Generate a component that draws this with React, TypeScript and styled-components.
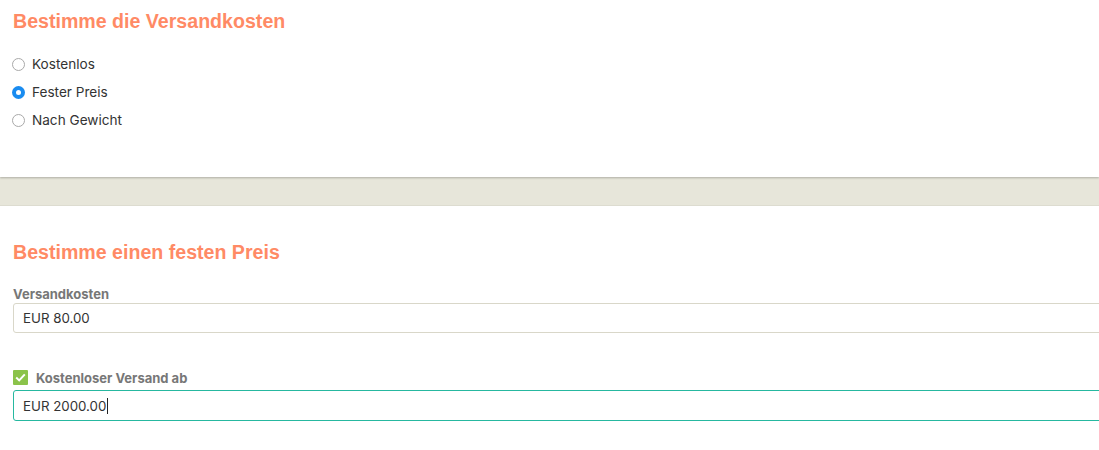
import React from "react";
import styled, { createGlobalStyle } from "styled-components";

const Global = createGlobalStyle`
  html, body { margin: 0; padding: 0; background: #fff; overflow: hidden; }
  body { font-family: Inter, "Liberation Sans", Arial, sans-serif; color: #333; }
  * { box-sizing: border-box; }
`;

const Page = styled.div`
  width: 1099px;
  overflow: hidden;
  display: flex;
  flex-direction: column;
`;

const Panel = styled.section<{ $h: number; $shadow?: boolean }>`
  height: ${(p) => p.$h}px;
  background: #fff;
  padding: 10px 13px 0 13px;
  position: relative;
  box-shadow: ${(p) => (p.$shadow ? "0 1px 2px rgba(0,0,0,0.25)" : "none")};
  z-index: 1;
`;

const Band = styled.div`
  height: 29px;
  background: #e7e6da;
  border-bottom: 1px solid #dddcd0;
`;

const Heading = styled.h2`
  margin: 0;
  font-family: "Liberation Sans", Arial, sans-serif;
  font-size: 19.6px;
  line-height: 22px;
  font-weight: 700;
  color: #ff8a65;
`;

const RadioList = styled.div`
  margin-top: 22px;
  display: flex;
  flex-direction: column;
  gap: 8px;
`;

const RadioRow = styled.label`
  display: flex;
  align-items: center;
  height: 20px;
  gap: 7px;
  font-size: 13.6px;
  color: #333;
`;

const RadioDot = styled.span<{ $on?: boolean }>`
  width: 13px;
  height: 13px;
  margin-left: -1px;
  border-radius: 50%;
  border: ${(p) => (p.$on ? "none" : "1px solid #a9a9a9")};
  background: ${(p) => (p.$on ? "#1a8cf0" : "#fff")};
  display: flex;
  align-items: center;
  justify-content: center;
  &::after {
    content: "";
    display: ${(p) => (p.$on ? "block" : "none")};
    width: 5px;
    height: 5px;
    border-radius: 50%;
    background: #fff;
  }
`;

const FieldLabel = styled.div`
  font-size: 13px;
  font-weight: 700;
  color: #777;
  line-height: 14px;
`;

const Input = styled.div<{ $focus?: boolean }>`
  width: 1120px;
  height: ${(p) => (p.$focus ? 31 : 30)}px;
  border: 1px solid ${(p) => (p.$focus ? "#26b8a0" : "#d9d7c9")};
  border-radius: 3px;
  display: flex;
  align-items: center;
  padding-left: 9px;
  font-size: 13.3px;
  color: #333;
`;

const Caret = styled.span`
  display: inline-block;
  width: 1px;
  height: 16px;
  background: #222;
  margin-left: 1px;
`;

const CheckRow = styled.div`
  display: flex;
  align-items: center;
  gap: 8px;
  margin-top: 37px;
  margin-bottom: 5px;
`;

const CheckBox = styled.span`
  width: 15px;
  height: 15px;
  background: #8bc34a;
  border-radius: 1px;
  display: flex;
  align-items: center;
  justify-content: center;
`;

const Section2Heading = styled(Heading)`
  margin-top: 25px;
  margin-bottom: 24px;
`;

const FirstLabel = styled(FieldLabel)`
  margin-bottom: 2px;
`;

export default function App() {
  return (
    <Page>
      <Global />
      <Panel $h={177} $shadow>
        <Heading>Bestimme die Versandkosten</Heading>
        <RadioList>
          <RadioRow>
            <RadioDot />
            Kostenlos
          </RadioRow>
          <RadioRow>
            <RadioDot $on />
            Fester Preis
          </RadioRow>
          <RadioRow>
            <RadioDot />
            Nach Gewicht
          </RadioRow>
        </RadioList>
      </Panel>
      <Band />
      <Panel $h={244}>
        <Section2Heading>Bestimme einen festen Preis</Section2Heading>
        <FirstLabel>Versandkosten</FirstLabel>
        <Input>EUR 80.00</Input>
        <CheckRow>
          <CheckBox>
            <svg width="11" height="9" viewBox="0 0 11 9">
              <path d="M1.2 4.6 L4.2 7.4 L9.8 1.4" stroke="#fff" strokeWidth="2" fill="none" />
            </svg>
          </CheckBox>
          <FieldLabel>Kostenloser Versand ab</FieldLabel>
        </CheckRow>
        <Input $focus>
          EUR 2000.00
          <Caret />
        </Input>
      </Panel>
    </Page>
  );
}
